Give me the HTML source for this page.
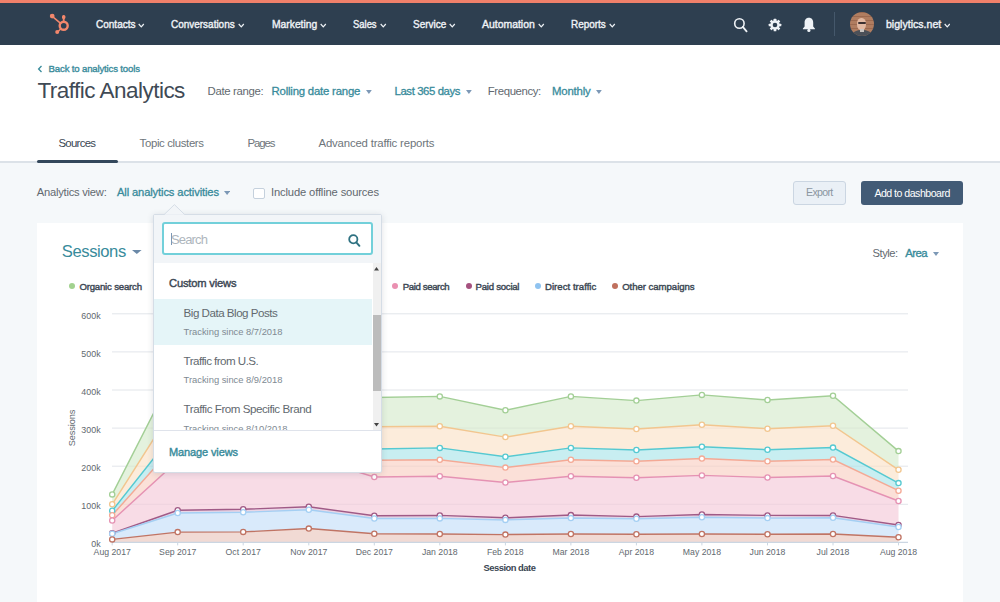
<!DOCTYPE html>
<html><head><meta charset="utf-8"><style>
html,body{margin:0;padding:0;}
body{width:1000px;height:602px;overflow:hidden;position:relative;background:#f5f8fa;font-family:"Liberation Sans", sans-serif;}
.t{position:absolute;line-height:1;white-space:nowrap;}
.dot{position:absolute;width:6px;height:6px;border-radius:50%;}
</style></head><body>
<div style="position:absolute;left:0;top:0;width:1000px;height:4px;background:#f0806a"></div>
<div style="position:absolute;left:0;top:3.2px;width:1000px;height:42.2px;background:#2e3f50"></div>
<!-- logo -->
<svg style="position:absolute;left:44px;top:8px" width="36" height="32" viewBox="0 0 36 32">
 <g fill="none" stroke="#f3876c" stroke-linecap="round">
  <circle cx="19.7" cy="17.8" r="4" stroke-width="2.4"/>
  <line x1="19.7" y1="13.8" x2="19.7" y2="8.6" stroke-width="1.8"/>
  <line x1="16.6" y1="15.4" x2="8.6" y2="8.6" stroke-width="1.5"/>
  <line x1="16.9" y1="20.7" x2="13.4" y2="24.2" stroke-width="1.5"/>
 </g>
 <g fill="#f3876c"><rect x="18" y="7" width="3.4" height="4" rx="1.5"/><circle cx="8.2" cy="8.1" r="2.4"/><circle cx="13.2" cy="24.1" r="2"/></g>
</svg>
<svg style="position:absolute;left:138.3px;top:22.5px" width="6.5" height="5" viewBox="0 0 6.5 5"><path d="M0.7 1 L3.25 3.9 L5.80 1" fill="none" stroke="#eef2f6" stroke-width="1.2"/></svg><svg style="position:absolute;left:238.3px;top:22.5px" width="6.5" height="5" viewBox="0 0 6.5 5"><path d="M0.7 1 L3.25 3.9 L5.80 1" fill="none" stroke="#eef2f6" stroke-width="1.2"/></svg><svg style="position:absolute;left:320.3px;top:22.5px" width="6.5" height="5" viewBox="0 0 6.5 5"><path d="M0.7 1 L3.25 3.9 L5.80 1" fill="none" stroke="#eef2f6" stroke-width="1.2"/></svg><svg style="position:absolute;left:380.1px;top:22.5px" width="6.5" height="5" viewBox="0 0 6.5 5"><path d="M0.7 1 L3.25 3.9 L5.80 1" fill="none" stroke="#eef2f6" stroke-width="1.2"/></svg><svg style="position:absolute;left:449.3px;top:22.5px" width="6.5" height="5" viewBox="0 0 6.5 5"><path d="M0.7 1 L3.25 3.9 L5.80 1" fill="none" stroke="#eef2f6" stroke-width="1.2"/></svg><svg style="position:absolute;left:538.0999999999999px;top:22.5px" width="6.5" height="5" viewBox="0 0 6.5 5"><path d="M0.7 1 L3.25 3.9 L5.80 1" fill="none" stroke="#eef2f6" stroke-width="1.2"/></svg><svg style="position:absolute;left:609.3px;top:22.5px" width="6.5" height="5" viewBox="0 0 6.5 5"><path d="M0.7 1 L3.25 3.9 L5.80 1" fill="none" stroke="#eef2f6" stroke-width="1.2"/></svg><svg style="position:absolute;left:943.8px;top:22.5px" width="6.5" height="5" viewBox="0 0 6.5 5"><path d="M0.7 1 L3.25 3.9 L5.80 1" fill="none" stroke="#eef2f6" stroke-width="1.2"/></svg>
<!-- search icon -->
<svg style="position:absolute;left:733px;top:17px" width="16" height="16" viewBox="0 0 16 16"><circle cx="6.4" cy="6.5" r="4.7" fill="none" stroke="#eef2f6" stroke-width="1.6"/><line x1="9.8" y1="9.9" x2="13.6" y2="14.3" stroke="#eef2f6" stroke-width="1.8" stroke-linecap="round"/></svg>
<!-- gear -->
<svg style="position:absolute;left:768px;top:17.5px" width="14" height="14" viewBox="0 0 14 14"><g fill="#eef2f6" transform="translate(7 7)">
<circle r="4.7"/>
<rect x="-1.35" y="-6.3" width="2.7" height="12.6" rx="0.5"/>
<rect x="-1.35" y="-6.3" width="2.7" height="12.6" rx="0.5" transform="rotate(45)"/>
<rect x="-1.35" y="-6.3" width="2.7" height="12.6" rx="0.5" transform="rotate(90)"/>
<rect x="-1.35" y="-6.3" width="2.7" height="12.6" rx="0.5" transform="rotate(135)"/>
</g><circle cx="7" cy="7" r="2.3" fill="#2e3f50"/></svg>
<!-- bell -->
<svg style="position:absolute;left:801px;top:16px" width="16" height="17" viewBox="0 0 16 17"><path d="M7.9 1.8 C4.9 1.8 3.6 4 3.6 6.8 L3.6 10.5 L1.9 12.4 L1.9 13.3 L13.9 13.3 L13.9 12.4 L12.2 10.5 L12.2 6.8 C12.2 4 10.9 1.8 7.9 1.8 Z" fill="#eef2f6"/><circle cx="7.9" cy="14.4" r="1.6" fill="#eef2f6"/></svg>
<div style="position:absolute;left:834px;top:12px;width:1px;height:23.5px;background:#45586b"></div>
<!-- avatar -->
<div style="position:absolute;left:849.8px;top:12.2px;width:24px;height:24px;border-radius:50%;background:#b07d60;overflow:hidden">
 <div style="position:absolute;left:0;top:0;width:24px;height:24px;background:repeating-linear-gradient(180deg, rgba(120,70,50,0.35) 0 1px, rgba(0,0,0,0) 1px 4px)"></div>
 <div style="position:absolute;left:7.5px;top:5.5px;width:9px;height:12px;border-radius:45%;background:#e2b9a2"></div>
 <div style="position:absolute;left:7.8px;top:9.5px;width:8.4px;height:2.6px;border-radius:1px;background:#3b3030"></div>
 <div style="position:absolute;left:2px;top:18px;width:20px;height:10px;border-radius:50% 50% 0 0;background:#4b5058"></div>
 <div style="position:absolute;left:10px;top:17px;width:4px;height:3px;background:#c9c4c0"></div>
</div>
<!-- header white -->
<div style="position:absolute;left:0;top:45.4px;width:1000px;height:116.6px;background:#fff"></div>
<div style="position:absolute;left:0;top:161.4px;width:1000px;height:1.2px;background:#dce2e8"></div>
<svg style="position:absolute;left:37px;top:64.5px" width="6" height="8" viewBox="0 0 6 8"><path d="M4.5 1 L1.6 4 L4.5 7" fill="none" stroke="#388b9b" stroke-width="1.3"/></svg>
<svg style="position:absolute;left:366.2px;top:90px" width="5.8" height="4" viewBox="0 0 5.8 4"><path d="M0 0 L5.8 0 L2.9 4 Z" fill="#7c98b6"/></svg>
<svg style="position:absolute;left:466px;top:90px" width="5.8" height="4" viewBox="0 0 5.8 4"><path d="M0 0 L5.8 0 L2.9 4 Z" fill="#7c98b6"/></svg>
<svg style="position:absolute;left:596.2px;top:90px" width="5.8" height="4" viewBox="0 0 5.8 4"><path d="M0 0 L5.8 0 L2.9 4 Z" fill="#7c98b6"/></svg>
<div style="position:absolute;left:37px;top:159.8px;width:81px;height:3.6px;border-radius:2px;background:#33475b"></div>
<!-- controls -->
<svg style="position:absolute;left:224.3px;top:191.4px" width="6.2" height="4" viewBox="0 0 6.2 4"><path d="M0 0 L6.2 0 L3.1 4 Z" fill="#7c98b6"/></svg>
<div style="position:absolute;left:253px;top:187.6px;width:9.6px;height:9.6px;border:1px solid #c5d1dd;border-radius:2px;background:#fff"></div>
<div style="position:absolute;left:793.4px;top:181.4px;width:50.4px;height:21.9px;border:1px solid #cbd6e2;border-radius:3px;background:#eaf0f6"></div>
<div style="position:absolute;left:861.2px;top:181.4px;width:101.8px;height:23.9px;border-radius:3px;background:#425b76"></div>
<!-- card -->
<div style="position:absolute;left:37px;top:222.8px;width:925.6px;height:400px;background:#fff"></div>
<svg style="position:absolute;left:132.2px;top:249.6px" width="9.6" height="4" viewBox="0 0 9.6 4"><path d="M0 0 L9.6 0 L4.8 4 Z" fill="#6a89a8"/></svg>
<svg style="position:absolute;left:932.5px;top:252.2px" width="6" height="4" viewBox="0 0 6 4"><path d="M0 0 L6 0 L3.0 4 Z" fill="#7c98b6"/></svg>
<div class="dot" style="left:69.2px;top:283.4px;background:#a2d28f"></div><div class="dot" style="left:392.3px;top:283.4px;background:#ea90b1"></div><div class="dot" style="left:466.1px;top:283.4px;background:#a5527f"></div><div class="dot" style="left:534.5px;top:283.4px;background:#8fc3f0"></div><div class="dot" style="left:611.7px;top:283.4px;background:#c0705e"></div>
<svg width="1000" height="602" style="position:absolute;left:0;top:0">
<line x1="112" y1="313.8" x2="908" y2="313.8" stroke="#eceff3" stroke-width="1"/>
<line x1="112" y1="351.9" x2="908" y2="351.9" stroke="#eceff3" stroke-width="1"/>
<line x1="112" y1="390.0" x2="908" y2="390.0" stroke="#eceff3" stroke-width="1"/>
<line x1="112" y1="428.1" x2="908" y2="428.1" stroke="#eceff3" stroke-width="1"/>
<line x1="112" y1="466.2" x2="908" y2="466.2" stroke="#eceff3" stroke-width="1"/>
<line x1="112" y1="504.3" x2="908" y2="504.3" stroke="#eceff3" stroke-width="1"/>
<polygon points="112.2,539.4 177.7,532.1 243.2,531.9 308.8,528.6 374.3,533.7 439.8,534.0 505.4,534.6 570.9,534.0 636.4,534.3 701.9,534.0 767.5,534.3 833.0,534.0 898.5,537.2 898.5,542.4 833.0,542.4 767.5,542.4 701.9,542.4 636.4,542.4 570.9,542.4 505.4,542.4 439.8,542.4 374.3,542.4 308.8,542.4 243.2,542.4 177.7,542.4 112.2,542.4" fill="#f1dad4"/>
<polygon points="112.2,533.8 177.7,513.0 243.2,512.3 308.8,509.8 374.3,518.5 439.8,518.4 505.4,519.9 570.9,518.1 636.4,518.7 701.9,517.2 767.5,518.1 833.0,517.8 898.5,527.0 898.5,537.2 833.0,534.0 767.5,534.3 701.9,534.0 636.4,534.3 570.9,534.0 505.4,534.6 439.8,534.0 374.3,533.7 308.8,528.6 243.2,531.9 177.7,532.1 112.2,539.4" fill="#d9eafb"/>
<polygon points="112.2,533.2 177.7,510.2 243.2,509.3 308.8,506.8 374.3,515.8 439.8,515.4 505.4,517.8 570.9,515.1 636.4,516.6 701.9,514.5 767.5,515.4 833.0,515.4 898.5,525.0 898.5,527.0 833.0,517.8 767.5,518.1 701.9,517.2 636.4,518.7 570.9,518.1 505.4,519.9 439.8,518.4 374.3,518.5 308.8,509.8 243.2,512.3 177.7,513.0 112.2,533.8" fill="#e9d6e6"/>
<polygon points="112.2,520.5 177.7,460.7 243.2,459.0 308.8,457.0 374.3,477.0 439.8,476.3 505.4,482.5 570.9,476.3 636.4,477.8 701.9,475.4 767.5,477.5 833.0,476.0 898.5,501.0 898.5,525.0 833.0,515.4 767.5,515.4 701.9,514.5 636.4,516.6 570.9,515.1 505.4,517.8 439.8,515.4 374.3,515.8 308.8,506.8 243.2,509.3 177.7,510.2 112.2,533.2" fill="#f8dce6"/>
<polygon points="112.2,515.2 177.7,442.0 243.2,443.0 308.8,441.0 374.3,460.2 439.8,459.8 505.4,467.6 570.9,459.8 636.4,461.3 701.9,458.6 767.5,461.3 833.0,459.5 898.5,490.7 898.5,501.0 833.0,476.0 767.5,477.5 701.9,475.4 636.4,477.8 570.9,476.3 505.4,482.5 439.8,476.3 374.3,477.0 308.8,457.0 243.2,459.0 177.7,460.7 112.2,520.5" fill="#fbe0d8"/>
<polygon points="112.2,510.8 177.7,428.0 243.2,429.0 308.8,427.0 374.3,448.9 439.8,447.9 505.4,456.8 570.9,447.9 636.4,450.0 701.9,446.7 767.5,449.7 833.0,447.6 898.5,483.1 898.5,490.7 833.0,459.5 767.5,461.3 701.9,458.6 636.4,461.3 570.9,459.8 505.4,467.6 439.8,459.8 374.3,460.2 308.8,441.0 243.2,443.0 177.7,442.0 112.2,515.2" fill="#c8eef1"/>
<polygon points="112.2,504.3 177.7,401.0 243.2,402.0 308.8,400.0 374.3,426.7 439.8,426.3 505.4,437.1 570.9,426.3 636.4,429.0 701.9,424.8 767.5,428.7 833.0,425.7 898.5,469.8 898.5,483.1 833.0,447.6 767.5,449.7 701.9,446.7 636.4,450.0 570.9,447.9 505.4,456.8 439.8,447.9 374.3,448.9 308.8,427.0 243.2,429.0 177.7,428.0 112.2,510.8" fill="#fcecdb"/>
<polygon points="112.2,494.4 177.7,366.0 243.2,368.0 308.8,366.0 374.3,397.4 439.8,396.4 505.4,410.2 570.9,396.4 636.4,400.6 701.9,394.9 767.5,400.0 833.0,395.8 898.5,451.1 898.5,469.8 833.0,425.7 767.5,428.7 701.9,424.8 636.4,429.0 570.9,426.3 505.4,437.1 439.8,426.3 374.3,426.7 308.8,400.0 243.2,402.0 177.7,401.0 112.2,504.3" fill="#e4f2de"/>
<line x1="112" y1="313.8" x2="908" y2="313.8" stroke="rgba(110,120,130,0.07)" stroke-width="1"/>
<line x1="112" y1="351.9" x2="908" y2="351.9" stroke="rgba(110,120,130,0.07)" stroke-width="1"/>
<line x1="112" y1="390.0" x2="908" y2="390.0" stroke="rgba(110,120,130,0.07)" stroke-width="1"/>
<line x1="112" y1="428.1" x2="908" y2="428.1" stroke="rgba(110,120,130,0.07)" stroke-width="1"/>
<line x1="112" y1="466.2" x2="908" y2="466.2" stroke="rgba(110,120,130,0.07)" stroke-width="1"/>
<line x1="112" y1="504.3" x2="908" y2="504.3" stroke="rgba(110,120,130,0.07)" stroke-width="1"/>
<line x1="112" y1="542.4" x2="908" y2="542.4" stroke="#cbd6e2" stroke-width="1.2"/>
<line x1="112.2" y1="542.4" x2="112.2" y2="545.4" stroke="#cbd6e2" stroke-width="1"/>
<line x1="177.7" y1="542.4" x2="177.7" y2="545.4" stroke="#cbd6e2" stroke-width="1"/>
<line x1="243.2" y1="542.4" x2="243.2" y2="545.4" stroke="#cbd6e2" stroke-width="1"/>
<line x1="308.8" y1="542.4" x2="308.8" y2="545.4" stroke="#cbd6e2" stroke-width="1"/>
<line x1="374.3" y1="542.4" x2="374.3" y2="545.4" stroke="#cbd6e2" stroke-width="1"/>
<line x1="439.8" y1="542.4" x2="439.8" y2="545.4" stroke="#cbd6e2" stroke-width="1"/>
<line x1="505.4" y1="542.4" x2="505.4" y2="545.4" stroke="#cbd6e2" stroke-width="1"/>
<line x1="570.9" y1="542.4" x2="570.9" y2="545.4" stroke="#cbd6e2" stroke-width="1"/>
<line x1="636.4" y1="542.4" x2="636.4" y2="545.4" stroke="#cbd6e2" stroke-width="1"/>
<line x1="701.9" y1="542.4" x2="701.9" y2="545.4" stroke="#cbd6e2" stroke-width="1"/>
<line x1="767.5" y1="542.4" x2="767.5" y2="545.4" stroke="#cbd6e2" stroke-width="1"/>
<line x1="833.0" y1="542.4" x2="833.0" y2="545.4" stroke="#cbd6e2" stroke-width="1"/>
<line x1="898.5" y1="542.4" x2="898.5" y2="545.4" stroke="#cbd6e2" stroke-width="1"/>
<polyline points="112.2,494.4 177.7,366.0 243.2,368.0 308.8,366.0 374.3,397.4 439.8,396.4 505.4,410.2 570.9,396.4 636.4,400.6 701.9,394.9 767.5,400.0 833.0,395.8 898.5,451.1" fill="none" stroke="#a3cf96" stroke-width="1.45"/>
<polyline points="112.2,504.3 177.7,401.0 243.2,402.0 308.8,400.0 374.3,426.7 439.8,426.3 505.4,437.1 570.9,426.3 636.4,429.0 701.9,424.8 767.5,428.7 833.0,425.7 898.5,469.8" fill="none" stroke="#f2c68f" stroke-width="1.45"/>
<polyline points="112.2,510.8 177.7,428.0 243.2,429.0 308.8,427.0 374.3,448.9 439.8,447.9 505.4,456.8 570.9,447.9 636.4,450.0 701.9,446.7 767.5,449.7 833.0,447.6 898.5,483.1" fill="none" stroke="#55c9d1" stroke-width="1.45"/>
<polyline points="112.2,515.2 177.7,442.0 243.2,443.0 308.8,441.0 374.3,460.2 439.8,459.8 505.4,467.6 570.9,459.8 636.4,461.3 701.9,458.6 767.5,461.3 833.0,459.5 898.5,490.7" fill="none" stroke="#f4a995" stroke-width="1.45"/>
<polyline points="112.2,520.5 177.7,460.7 243.2,459.0 308.8,457.0 374.3,477.0 439.8,476.3 505.4,482.5 570.9,476.3 636.4,477.8 701.9,475.4 767.5,477.5 833.0,476.0 898.5,501.0" fill="none" stroke="#e592b3" stroke-width="1.45"/>
<polyline points="112.2,533.2 177.7,510.2 243.2,509.3 308.8,506.8 374.3,515.8 439.8,515.4 505.4,517.8 570.9,515.1 636.4,516.6 701.9,514.5 767.5,515.4 833.0,515.4 898.5,525.0" fill="none" stroke="#a05a86" stroke-width="1.45"/>
<polyline points="112.2,533.8 177.7,513.0 243.2,512.3 308.8,509.8 374.3,518.5 439.8,518.4 505.4,519.9 570.9,518.1 636.4,518.7 701.9,517.2 767.5,518.1 833.0,517.8 898.5,527.0" fill="none" stroke="#a4cff3" stroke-width="1.45"/>
<polyline points="112.2,539.4 177.7,532.1 243.2,531.9 308.8,528.6 374.3,533.7 439.8,534.0 505.4,534.6 570.9,534.0 636.4,534.3 701.9,534.0 767.5,534.3 833.0,534.0 898.5,537.2" fill="none" stroke="#c07464" stroke-width="1.45"/>
<circle cx="112.2" cy="494.4" r="2.6" fill="#fff" stroke="#a3cf96" stroke-width="1.3"/>
<circle cx="177.7" cy="366.0" r="2.6" fill="#fff" stroke="#a3cf96" stroke-width="1.3"/>
<circle cx="243.2" cy="368.0" r="2.6" fill="#fff" stroke="#a3cf96" stroke-width="1.3"/>
<circle cx="308.8" cy="366.0" r="2.6" fill="#fff" stroke="#a3cf96" stroke-width="1.3"/>
<circle cx="374.3" cy="397.4" r="2.6" fill="#fff" stroke="#a3cf96" stroke-width="1.3"/>
<circle cx="439.8" cy="396.4" r="2.6" fill="#fff" stroke="#a3cf96" stroke-width="1.3"/>
<circle cx="505.4" cy="410.2" r="2.6" fill="#fff" stroke="#a3cf96" stroke-width="1.3"/>
<circle cx="570.9" cy="396.4" r="2.6" fill="#fff" stroke="#a3cf96" stroke-width="1.3"/>
<circle cx="636.4" cy="400.6" r="2.6" fill="#fff" stroke="#a3cf96" stroke-width="1.3"/>
<circle cx="701.9" cy="394.9" r="2.6" fill="#fff" stroke="#a3cf96" stroke-width="1.3"/>
<circle cx="767.5" cy="400.0" r="2.6" fill="#fff" stroke="#a3cf96" stroke-width="1.3"/>
<circle cx="833.0" cy="395.8" r="2.6" fill="#fff" stroke="#a3cf96" stroke-width="1.3"/>
<circle cx="898.5" cy="451.1" r="2.6" fill="#fff" stroke="#a3cf96" stroke-width="1.3"/>
<circle cx="112.2" cy="504.3" r="2.6" fill="#fff" stroke="#f2c68f" stroke-width="1.3"/>
<circle cx="177.7" cy="401.0" r="2.6" fill="#fff" stroke="#f2c68f" stroke-width="1.3"/>
<circle cx="243.2" cy="402.0" r="2.6" fill="#fff" stroke="#f2c68f" stroke-width="1.3"/>
<circle cx="308.8" cy="400.0" r="2.6" fill="#fff" stroke="#f2c68f" stroke-width="1.3"/>
<circle cx="374.3" cy="426.7" r="2.6" fill="#fff" stroke="#f2c68f" stroke-width="1.3"/>
<circle cx="439.8" cy="426.3" r="2.6" fill="#fff" stroke="#f2c68f" stroke-width="1.3"/>
<circle cx="505.4" cy="437.1" r="2.6" fill="#fff" stroke="#f2c68f" stroke-width="1.3"/>
<circle cx="570.9" cy="426.3" r="2.6" fill="#fff" stroke="#f2c68f" stroke-width="1.3"/>
<circle cx="636.4" cy="429.0" r="2.6" fill="#fff" stroke="#f2c68f" stroke-width="1.3"/>
<circle cx="701.9" cy="424.8" r="2.6" fill="#fff" stroke="#f2c68f" stroke-width="1.3"/>
<circle cx="767.5" cy="428.7" r="2.6" fill="#fff" stroke="#f2c68f" stroke-width="1.3"/>
<circle cx="833.0" cy="425.7" r="2.6" fill="#fff" stroke="#f2c68f" stroke-width="1.3"/>
<circle cx="898.5" cy="469.8" r="2.6" fill="#fff" stroke="#f2c68f" stroke-width="1.3"/>
<circle cx="112.2" cy="510.8" r="2.6" fill="#fff" stroke="#55c9d1" stroke-width="1.3"/>
<circle cx="177.7" cy="428.0" r="2.6" fill="#fff" stroke="#55c9d1" stroke-width="1.3"/>
<circle cx="243.2" cy="429.0" r="2.6" fill="#fff" stroke="#55c9d1" stroke-width="1.3"/>
<circle cx="308.8" cy="427.0" r="2.6" fill="#fff" stroke="#55c9d1" stroke-width="1.3"/>
<circle cx="374.3" cy="448.9" r="2.6" fill="#fff" stroke="#55c9d1" stroke-width="1.3"/>
<circle cx="439.8" cy="447.9" r="2.6" fill="#fff" stroke="#55c9d1" stroke-width="1.3"/>
<circle cx="505.4" cy="456.8" r="2.6" fill="#fff" stroke="#55c9d1" stroke-width="1.3"/>
<circle cx="570.9" cy="447.9" r="2.6" fill="#fff" stroke="#55c9d1" stroke-width="1.3"/>
<circle cx="636.4" cy="450.0" r="2.6" fill="#fff" stroke="#55c9d1" stroke-width="1.3"/>
<circle cx="701.9" cy="446.7" r="2.6" fill="#fff" stroke="#55c9d1" stroke-width="1.3"/>
<circle cx="767.5" cy="449.7" r="2.6" fill="#fff" stroke="#55c9d1" stroke-width="1.3"/>
<circle cx="833.0" cy="447.6" r="2.6" fill="#fff" stroke="#55c9d1" stroke-width="1.3"/>
<circle cx="898.5" cy="483.1" r="2.6" fill="#fff" stroke="#55c9d1" stroke-width="1.3"/>
<circle cx="112.2" cy="515.2" r="2.6" fill="#fff" stroke="#f4a995" stroke-width="1.3"/>
<circle cx="177.7" cy="442.0" r="2.6" fill="#fff" stroke="#f4a995" stroke-width="1.3"/>
<circle cx="243.2" cy="443.0" r="2.6" fill="#fff" stroke="#f4a995" stroke-width="1.3"/>
<circle cx="308.8" cy="441.0" r="2.6" fill="#fff" stroke="#f4a995" stroke-width="1.3"/>
<circle cx="374.3" cy="460.2" r="2.6" fill="#fff" stroke="#f4a995" stroke-width="1.3"/>
<circle cx="439.8" cy="459.8" r="2.6" fill="#fff" stroke="#f4a995" stroke-width="1.3"/>
<circle cx="505.4" cy="467.6" r="2.6" fill="#fff" stroke="#f4a995" stroke-width="1.3"/>
<circle cx="570.9" cy="459.8" r="2.6" fill="#fff" stroke="#f4a995" stroke-width="1.3"/>
<circle cx="636.4" cy="461.3" r="2.6" fill="#fff" stroke="#f4a995" stroke-width="1.3"/>
<circle cx="701.9" cy="458.6" r="2.6" fill="#fff" stroke="#f4a995" stroke-width="1.3"/>
<circle cx="767.5" cy="461.3" r="2.6" fill="#fff" stroke="#f4a995" stroke-width="1.3"/>
<circle cx="833.0" cy="459.5" r="2.6" fill="#fff" stroke="#f4a995" stroke-width="1.3"/>
<circle cx="898.5" cy="490.7" r="2.6" fill="#fff" stroke="#f4a995" stroke-width="1.3"/>
<circle cx="112.2" cy="520.5" r="2.6" fill="#fff" stroke="#e592b3" stroke-width="1.3"/>
<circle cx="177.7" cy="460.7" r="2.6" fill="#fff" stroke="#e592b3" stroke-width="1.3"/>
<circle cx="243.2" cy="459.0" r="2.6" fill="#fff" stroke="#e592b3" stroke-width="1.3"/>
<circle cx="308.8" cy="457.0" r="2.6" fill="#fff" stroke="#e592b3" stroke-width="1.3"/>
<circle cx="374.3" cy="477.0" r="2.6" fill="#fff" stroke="#e592b3" stroke-width="1.3"/>
<circle cx="439.8" cy="476.3" r="2.6" fill="#fff" stroke="#e592b3" stroke-width="1.3"/>
<circle cx="505.4" cy="482.5" r="2.6" fill="#fff" stroke="#e592b3" stroke-width="1.3"/>
<circle cx="570.9" cy="476.3" r="2.6" fill="#fff" stroke="#e592b3" stroke-width="1.3"/>
<circle cx="636.4" cy="477.8" r="2.6" fill="#fff" stroke="#e592b3" stroke-width="1.3"/>
<circle cx="701.9" cy="475.4" r="2.6" fill="#fff" stroke="#e592b3" stroke-width="1.3"/>
<circle cx="767.5" cy="477.5" r="2.6" fill="#fff" stroke="#e592b3" stroke-width="1.3"/>
<circle cx="833.0" cy="476.0" r="2.6" fill="#fff" stroke="#e592b3" stroke-width="1.3"/>
<circle cx="898.5" cy="501.0" r="2.6" fill="#fff" stroke="#e592b3" stroke-width="1.3"/>
<circle cx="112.2" cy="533.2" r="2.6" fill="#fff" stroke="#a05a86" stroke-width="1.3"/>
<circle cx="177.7" cy="510.2" r="2.6" fill="#fff" stroke="#a05a86" stroke-width="1.3"/>
<circle cx="243.2" cy="509.3" r="2.6" fill="#fff" stroke="#a05a86" stroke-width="1.3"/>
<circle cx="308.8" cy="506.8" r="2.6" fill="#fff" stroke="#a05a86" stroke-width="1.3"/>
<circle cx="374.3" cy="515.8" r="2.6" fill="#fff" stroke="#a05a86" stroke-width="1.3"/>
<circle cx="439.8" cy="515.4" r="2.6" fill="#fff" stroke="#a05a86" stroke-width="1.3"/>
<circle cx="505.4" cy="517.8" r="2.6" fill="#fff" stroke="#a05a86" stroke-width="1.3"/>
<circle cx="570.9" cy="515.1" r="2.6" fill="#fff" stroke="#a05a86" stroke-width="1.3"/>
<circle cx="636.4" cy="516.6" r="2.6" fill="#fff" stroke="#a05a86" stroke-width="1.3"/>
<circle cx="701.9" cy="514.5" r="2.6" fill="#fff" stroke="#a05a86" stroke-width="1.3"/>
<circle cx="767.5" cy="515.4" r="2.6" fill="#fff" stroke="#a05a86" stroke-width="1.3"/>
<circle cx="833.0" cy="515.4" r="2.6" fill="#fff" stroke="#a05a86" stroke-width="1.3"/>
<circle cx="898.5" cy="525.0" r="2.6" fill="#fff" stroke="#a05a86" stroke-width="1.3"/>
<circle cx="112.2" cy="533.8" r="2.6" fill="#fff" stroke="#a4cff3" stroke-width="1.3"/>
<circle cx="177.7" cy="513.0" r="2.6" fill="#fff" stroke="#a4cff3" stroke-width="1.3"/>
<circle cx="243.2" cy="512.3" r="2.6" fill="#fff" stroke="#a4cff3" stroke-width="1.3"/>
<circle cx="308.8" cy="509.8" r="2.6" fill="#fff" stroke="#a4cff3" stroke-width="1.3"/>
<circle cx="374.3" cy="518.5" r="2.6" fill="#fff" stroke="#a4cff3" stroke-width="1.3"/>
<circle cx="439.8" cy="518.4" r="2.6" fill="#fff" stroke="#a4cff3" stroke-width="1.3"/>
<circle cx="505.4" cy="519.9" r="2.6" fill="#fff" stroke="#a4cff3" stroke-width="1.3"/>
<circle cx="570.9" cy="518.1" r="2.6" fill="#fff" stroke="#a4cff3" stroke-width="1.3"/>
<circle cx="636.4" cy="518.7" r="2.6" fill="#fff" stroke="#a4cff3" stroke-width="1.3"/>
<circle cx="701.9" cy="517.2" r="2.6" fill="#fff" stroke="#a4cff3" stroke-width="1.3"/>
<circle cx="767.5" cy="518.1" r="2.6" fill="#fff" stroke="#a4cff3" stroke-width="1.3"/>
<circle cx="833.0" cy="517.8" r="2.6" fill="#fff" stroke="#a4cff3" stroke-width="1.3"/>
<circle cx="898.5" cy="527.0" r="2.6" fill="#fff" stroke="#a4cff3" stroke-width="1.3"/>
<circle cx="112.2" cy="539.4" r="2.6" fill="#fff" stroke="#c07464" stroke-width="1.3"/>
<circle cx="177.7" cy="532.1" r="2.6" fill="#fff" stroke="#c07464" stroke-width="1.3"/>
<circle cx="243.2" cy="531.9" r="2.6" fill="#fff" stroke="#c07464" stroke-width="1.3"/>
<circle cx="308.8" cy="528.6" r="2.6" fill="#fff" stroke="#c07464" stroke-width="1.3"/>
<circle cx="374.3" cy="533.7" r="2.6" fill="#fff" stroke="#c07464" stroke-width="1.3"/>
<circle cx="439.8" cy="534.0" r="2.6" fill="#fff" stroke="#c07464" stroke-width="1.3"/>
<circle cx="505.4" cy="534.6" r="2.6" fill="#fff" stroke="#c07464" stroke-width="1.3"/>
<circle cx="570.9" cy="534.0" r="2.6" fill="#fff" stroke="#c07464" stroke-width="1.3"/>
<circle cx="636.4" cy="534.3" r="2.6" fill="#fff" stroke="#c07464" stroke-width="1.3"/>
<circle cx="701.9" cy="534.0" r="2.6" fill="#fff" stroke="#c07464" stroke-width="1.3"/>
<circle cx="767.5" cy="534.3" r="2.6" fill="#fff" stroke="#c07464" stroke-width="1.3"/>
<circle cx="833.0" cy="534.0" r="2.6" fill="#fff" stroke="#c07464" stroke-width="1.3"/>
<circle cx="898.5" cy="537.2" r="2.6" fill="#fff" stroke="#c07464" stroke-width="1.3"/>
</svg>
<div class="t" style="left:72.5px;top:428.3px;font-size:9.2px;color:#62696f;transform:translate(-50%,-50%) rotate(-90deg);transform-origin:50% 50%;letter-spacing:-0.1px">Sessions</div>
<div class="t" style="left:95.50px;top:18.99px;font-size:11px;font-weight:400;color:#eef2f6;letter-spacing:0.000px;transform:scaleX(0.9097);transform-origin:0 0;-webkit-text-stroke:0.4px;">Contacts</div><div class="t" style="left:171.30px;top:18.99px;font-size:11px;font-weight:400;color:#eef2f6;letter-spacing:0.000px;transform:scaleX(0.9058);transform-origin:0 0;-webkit-text-stroke:0.4px;">Conversations</div><div class="t" style="left:271.80px;top:18.99px;font-size:11px;font-weight:400;color:#eef2f6;letter-spacing:0.000px;transform:scaleX(0.9359);transform-origin:0 0;-webkit-text-stroke:0.4px;">Marketing</div><div class="t" style="left:353.20px;top:18.99px;font-size:11px;font-weight:400;color:#eef2f6;letter-spacing:0.000px;transform:scaleX(0.8572);transform-origin:0 0;-webkit-text-stroke:0.4px;">Sales</div><div class="t" style="left:412.80px;top:18.99px;font-size:11px;font-weight:400;color:#eef2f6;letter-spacing:0.000px;transform:scaleX(0.9049);transform-origin:0 0;-webkit-text-stroke:0.4px;">Service</div><div class="t" style="left:482.00px;top:18.99px;font-size:11px;font-weight:400;color:#eef2f6;letter-spacing:0.000px;transform:scaleX(0.9487);transform-origin:0 0;-webkit-text-stroke:0.4px;">Automation</div><div class="t" style="left:571.20px;top:18.99px;font-size:11px;font-weight:400;color:#eef2f6;letter-spacing:0.000px;transform:scaleX(0.9032);transform-origin:0 0;-webkit-text-stroke:0.4px;">Reports</div><div class="t" style="left:885.60px;top:18.99px;font-size:11px;font-weight:400;color:#eef2f6;letter-spacing:0.000px;transform:scaleX(0.9603);transform-origin:0 0;-webkit-text-stroke:0.4px;">biglytics.net</div><div class="t" style="left:48.60px;top:63.97px;font-size:9.6px;font-weight:400;color:#388b9b;letter-spacing:-0.160px;-webkit-text-stroke:0.35px;">Back to analytics tools</div><div class="t" style="left:37.40px;top:80.05px;font-size:22.5px;font-weight:400;color:#3f4a55;letter-spacing:-0.520px;">Traffic Analytics</div><div class="t" style="left:207.60px;top:86.45px;font-size:11.4px;font-weight:400;color:#62696f;letter-spacing:-0.353px;">Date range:</div><div class="t" style="left:271.60px;top:86.45px;font-size:11.4px;font-weight:400;color:#388b9b;letter-spacing:-0.216px;-webkit-text-stroke:0.3px;">Rolling date range</div><div class="t" style="left:394.50px;top:86.45px;font-size:11.4px;font-weight:400;color:#388b9b;letter-spacing:-0.411px;-webkit-text-stroke:0.3px;">Last 365 days</div><div class="t" style="left:487.80px;top:86.45px;font-size:11.4px;font-weight:400;color:#62696f;letter-spacing:-0.398px;">Frequency:</div><div class="t" style="left:552.00px;top:86.45px;font-size:11.4px;font-weight:400;color:#388b9b;letter-spacing:-0.182px;-webkit-text-stroke:0.3px;">Monthly</div><div class="t" style="left:58.40px;top:138.15px;font-size:11.4px;font-weight:400;color:#3a4652;letter-spacing:-0.699px;">Sources</div><div class="t" style="left:139.60px;top:138.15px;font-size:11.4px;font-weight:400;color:#6e757b;letter-spacing:-0.354px;">Topic clusters</div><div class="t" style="left:247.50px;top:138.15px;font-size:11.4px;font-weight:400;color:#6e757b;letter-spacing:-1.078px;">Pages</div><div class="t" style="left:318.50px;top:138.15px;font-size:11.4px;font-weight:400;color:#6e757b;letter-spacing:-0.178px;">Advanced traffic reports</div><div class="t" style="left:36.80px;top:187.42px;font-size:11.2px;font-weight:400;color:#62696f;letter-spacing:-0.241px;">Analytics view:</div><div class="t" style="left:117.00px;top:187.42px;font-size:11.2px;font-weight:400;color:#388b9b;letter-spacing:-0.134px;-webkit-text-stroke:0.3px;">All analytics activities</div><div class="t" style="left:271.00px;top:187.42px;font-size:11.2px;font-weight:400;color:#62696f;letter-spacing:-0.142px;">Include offline sources</div><div class="t" style="left:806.00px;top:187.43px;font-size:10.6px;font-weight:400;color:#8a96a1;letter-spacing:-0.665px;">Export</div><div class="t" style="left:874.40px;top:187.63px;font-size:10.6px;font-weight:400;color:#ffffff;letter-spacing:-0.516px;">Add to dashboard</div><div class="t" style="left:61.80px;top:243.95px;font-size:16.6px;font-weight:400;color:#388b9b;letter-spacing:-0.421px;">Sessions</div><div class="t" style="left:872.60px;top:248.12px;font-size:11.2px;font-weight:400;color:#62696f;letter-spacing:-0.477px;">Style:</div><div class="t" style="left:905.20px;top:247.95px;font-size:11.4px;font-weight:400;color:#388b9b;letter-spacing:-0.554px;-webkit-text-stroke:0.35px;">Area</div><div class="t" style="left:79.40px;top:281.87px;font-size:9.6px;font-weight:400;color:#3a4652;letter-spacing:-0.189px;-webkit-text-stroke:0.4px;">Organic search</div><div class="t" style="left:402.80px;top:281.87px;font-size:9.6px;font-weight:400;color:#3a4652;letter-spacing:-0.377px;-webkit-text-stroke:0.4px;">Paid search</div><div class="t" style="left:475.60px;top:281.87px;font-size:9.6px;font-weight:400;color:#3a4652;letter-spacing:-0.251px;-webkit-text-stroke:0.4px;">Paid social</div><div class="t" style="left:545.00px;top:281.87px;font-size:9.6px;font-weight:400;color:#3a4652;letter-spacing:0.023px;-webkit-text-stroke:0.4px;">Direct traffic</div><div class="t" style="left:622.20px;top:281.87px;font-size:9.6px;font-weight:400;color:#3a4652;letter-spacing:-0.047px;-webkit-text-stroke:0.4px;">Other campaigns</div><div class="t" style="left:81.35px;top:311.67px;font-size:8.9px;font-weight:400;color:#62696f;letter-spacing:0.000px;">600k</div><div class="t" style="left:81.35px;top:349.77px;font-size:8.9px;font-weight:400;color:#62696f;letter-spacing:0.000px;">500k</div><div class="t" style="left:81.35px;top:387.87px;font-size:8.9px;font-weight:400;color:#62696f;letter-spacing:0.000px;">400k</div><div class="t" style="left:81.35px;top:425.97px;font-size:8.9px;font-weight:400;color:#62696f;letter-spacing:0.000px;">300k</div><div class="t" style="left:81.35px;top:464.07px;font-size:8.9px;font-weight:400;color:#62696f;letter-spacing:0.000px;">200k</div><div class="t" style="left:81.35px;top:502.17px;font-size:8.9px;font-weight:400;color:#62696f;letter-spacing:0.000px;">100k</div><div class="t" style="left:91.22px;top:540.27px;font-size:8.9px;font-weight:400;color:#62696f;letter-spacing:0.000px;">0k</div><div class="t" style="left:93.60px;top:548.34px;font-size:8.7px;font-weight:400;color:#62696f;letter-spacing:0.000px;">Aug 2017</div><div class="t" style="left:159.12px;top:548.34px;font-size:8.7px;font-weight:400;color:#62696f;letter-spacing:0.000px;">Sep 2017</div><div class="t" style="left:225.62px;top:548.34px;font-size:8.7px;font-weight:400;color:#62696f;letter-spacing:0.000px;">Oct 2017</div><div class="t" style="left:290.17px;top:548.34px;font-size:8.7px;font-weight:400;color:#62696f;letter-spacing:0.000px;">Nov 2017</div><div class="t" style="left:355.70px;top:548.34px;font-size:8.7px;font-weight:400;color:#62696f;letter-spacing:0.000px;">Dec 2017</div><div class="t" style="left:421.95px;top:548.34px;font-size:8.7px;font-weight:400;color:#62696f;letter-spacing:0.000px;">Jan 2018</div><div class="t" style="left:486.99px;top:548.34px;font-size:8.7px;font-weight:400;color:#62696f;letter-spacing:0.000px;">Feb 2018</div><div class="t" style="left:552.52px;top:548.34px;font-size:8.7px;font-weight:400;color:#62696f;letter-spacing:0.000px;">Mar 2018</div><div class="t" style="left:618.77px;top:548.34px;font-size:8.7px;font-weight:400;color:#62696f;letter-spacing:0.000px;">Apr 2018</div><div class="t" style="left:682.85px;top:548.34px;font-size:8.7px;font-weight:400;color:#62696f;letter-spacing:0.000px;">May 2018</div><div class="t" style="left:749.58px;top:548.34px;font-size:8.7px;font-weight:400;color:#62696f;letter-spacing:0.000px;">Jun 2018</div><div class="t" style="left:816.55px;top:548.34px;font-size:8.7px;font-weight:400;color:#62696f;letter-spacing:0.000px;">Jul 2018</div><div class="t" style="left:879.90px;top:548.34px;font-size:8.7px;font-weight:400;color:#62696f;letter-spacing:0.000px;">Aug 2018</div><div class="t" style="left:483.45px;top:563.14px;font-size:9.4px;font-weight:700;color:#3a4652;letter-spacing:-0.486px;">Session date</div>
<!-- dropdown -->
<div style="position:absolute;left:153.3px;top:213.9px;width:228.5px;height:258.9px;background:#fff;border:1px solid #d5dde6;box-sizing:border-box;box-shadow:0 1px 6px rgba(45,62,80,0.15);border-radius:2px;overflow:hidden">
 <div style="position:absolute;left:0;top:0;width:100%;height:47.9px;background:#f2f5f8"></div>
 <div style="position:absolute;left:8.2px;top:7.6px;width:211px;height:32.2px;box-sizing:border-box;border:2px solid #72d0da;border-radius:3px;background:#fff"></div>
 <div style="position:absolute;left:0;top:83.7px;width:217.7px;height:46.6px;background:#e5f5f8"></div>
 <div style="position:absolute;left:218.5px;top:47.9px;width:9.4px;height:167.1px;background:#f0f0f0"></div>
 <div style="position:absolute;left:219px;top:100.1px;width:8px;height:76.4px;background:#bcbcbc"></div>
 <div style="position:absolute;left:0;top:215px;width:100%;height:1px;background:#dfe3eb"></div>
</div>
<svg style="position:absolute;left:163.5px;top:203.7px" width="21" height="11" viewBox="0 0 21 11"><path d="M0 10.7 L10.4 0.6 L20.8 10.7" fill="#f2f5f8" stroke="#d5dde6" stroke-width="1"/></svg>
<svg style="position:absolute;left:374px;top:267px" width="5" height="3.5" viewBox="0 0 5 3.5"><path d="M0 3.5 L5 3.5 L2.5 0 Z" fill="#444"/></svg>
<svg style="position:absolute;left:374px;top:423px" width="5" height="3.5" viewBox="0 0 5 3.5"><path d="M0 0 L5 0 L2.5 3.5 Z" fill="#444"/></svg>
<svg style="position:absolute;left:346px;top:232px" width="16" height="16" viewBox="0 0 16 16"><circle cx="7.3" cy="7.3" r="4.1" fill="none" stroke="#2f7282" stroke-width="1.8"/><line x1="10.3" y1="10.3" x2="13.4" y2="13.8" stroke="#2f7282" stroke-width="2" stroke-linecap="round"/></svg>
<div style="position:absolute;left:170.8px;top:233.4px;width:1px;height:12px;background:#7c98b6"></div>
<div class="t" style="left:171.00px;top:232.50px;font-size:13px;font-weight:400;color:#aeb6bd;letter-spacing:-0.841px;">Search</div><div class="t" style="left:169.00px;top:277.52px;font-size:11.2px;font-weight:400;color:#3a4652;letter-spacing:-0.195px;-webkit-text-stroke:0.4px;">Custom views</div><div class="t" style="left:183.60px;top:307.48px;font-size:11.6px;font-weight:400;color:#62696f;letter-spacing:-0.496px;">Big Data Blog Posts</div><div class="t" style="left:183.60px;top:327.34px;font-size:9.4px;font-weight:400;color:#808a93;letter-spacing:-0.014px;">Tracking since 8/7/2018</div><div class="t" style="left:183.60px;top:354.88px;font-size:11.6px;font-weight:400;color:#62696f;letter-spacing:-0.534px;">Traffic from U.S.</div><div class="t" style="left:183.60px;top:375.24px;font-size:9.4px;font-weight:400;color:#808a93;letter-spacing:-0.014px;">Tracking since 8/9/2018</div><div class="t" style="left:183.60px;top:403.48px;font-size:11.6px;font-weight:400;color:#62696f;letter-spacing:-0.454px;">Traffic From Specific Brand</div><div class="t" style="left:183.60px;top:424.34px;font-size:9.4px;font-weight:400;color:#808a93;letter-spacing:-0.018px;clip-path:inset(-10px -10px calc(100% - 5.6px) -10px);">Tracking since 8/10/2018</div><div class="t" style="left:169.00px;top:446.69px;font-size:11px;font-weight:400;color:#388b9b;letter-spacing:-0.121px;-webkit-text-stroke:0.4px;">Manage views</div>
</body></html>
